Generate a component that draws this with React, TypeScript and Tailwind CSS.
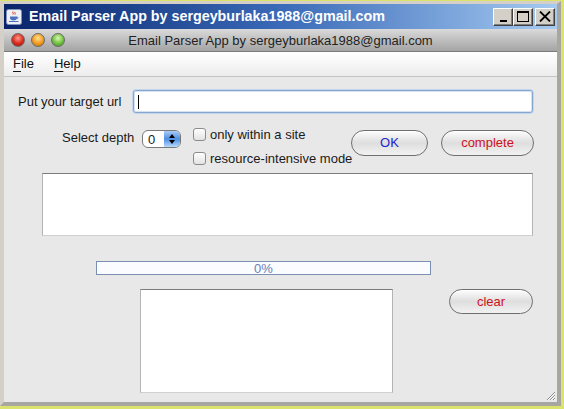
import React from 'react';

const font = "font-['Liberation_Sans',Arial,sans-serif]";

const JavaIcon = () => (
  <svg width="16" height="16" viewBox="0 0 16 16">
    <rect x="0.5" y="0.5" width="15" height="15" rx="2" fill="#eef0f4" stroke="#7f93b8" />
    <path d="M7 2.5c-1 1 1 1.6 0 3M9 3c-.8.8.8 1.3 0 2.5" stroke="#d8361f" strokeWidth="1" fill="none" />
    <path d="M4 7.5h7v1.6c0 1.5-1.5 2.4-3.5 2.4S4 10.6 4 9.1z" fill="#4a72c0" />
    <path d="M11 8c1.3 0 1.3 1.6 0 1.6" stroke="#4a72c0" fill="none" />
    <path d="M3 12.5h9.5" stroke="#4a72c0" strokeWidth="1" />
  </svg>
);

const WinButton = (props: any) => {
  return (
    <div className="flex h-[18px] w-[20px] items-center justify-center border border-b-[#404040] border-l-white border-r-[#404040] border-t-white bg-[#d4d0c8] shadow-[inset_-1px_-1px_0_#808080]">
      {props.children}
    </div>
  );
};

const Light = (props: any) => {
  return (
    <div
      className={`h-[14px] w-[14px] rounded-full border border-[#6a6a6a] ${props.cls}`}
    />
  );
};

const CheckRow = (props: any) => {
  return (
    <div className="flex h-[15px] items-center gap-[4px] whitespace-nowrap">
      <div className="h-[13px] w-[13px] shrink-0 rounded-[3px] border border-[#8c8c8c] bg-gradient-to-b from-white to-[#e2e2e2]" />
      <span className="text-[13px] leading-[15px] text-[#1a1a1a]">{props.label}</span>
    </div>
  );
};

const AquaButton = (props: any) => {
  return (
    <div
      className={`flex shrink-0 items-center justify-center rounded-full border border-[#6e6e6e] bg-gradient-to-b from-[#fdfdfd] via-[#dedede] to-[#f2f2f2] text-[13px] shadow-[inset_0_1px_0_#ffffff] ${props.cls}`}
    >
      {props.children}
    </div>
  );
};

const TextArea = (props: any) => {
  return (
    <div
      className={`shrink-0 border border-b-[#d0d0d0] border-l-[#b4b4b4] border-r-[#b4b4b4] border-t-[#7c7c7c] bg-white ${props.cls}`}
    />
  );
};

const App = () => {
  return (
    <div className={`flex h-[409px] w-[564px] flex-col bg-[#dbe36c] pt-[1px] ${font}`}>
      <div className="flex h-[405px] w-[561px] flex-col border-[4px] border-b-[#a8a6a0] border-l-[#d4d0c8] border-r-[#a8a6a0] border-t-[#d4d0c8] bg-[#d4d0c8] !border-t-[3px]">
        {/* windows title bar */}
        <div className="flex h-[25px] items-center bg-gradient-to-r from-[#0a246a] via-[#3a6ab8] to-[#a6caf0] pl-[2px] pr-[2px]">
          <JavaIcon />
          <span className="ml-[7px] text-[14.3px] font-bold leading-none text-white">
            Email Parser App by sergeyburlaka1988@gmail.com
          </span>
          <div className="ml-auto flex items-center">
            <WinButton>
              <div className="mt-[9px] h-[2px] w-[7px] bg-black" />
            </WinButton>
            <WinButton>
              <div className="h-[11px] w-[12px] border border-t-[2px] border-black" />
            </WinButton>
            <div className="ml-[2px]">
              <WinButton>
                <svg width="12" height="11" viewBox="0 0 12 11">
                  <path d="M1 0.5l10 10M11 0.5l-10 10" stroke="#000" strokeWidth="1.8" />
                </svg>
              </WinButton>
            </div>
          </div>
        </div>

        {/* mac title bar */}
        <div className="grid h-[23px] grid-cols-[1fr_auto_1fr] items-center border-b border-[#7a7a7a] bg-gradient-to-b from-[#dadada] to-[#a4a4a4]">
          <div className="flex items-center gap-[6px] pl-[7px]">
            <Light cls="bg-[radial-gradient(circle_at_50%_35%,#ff9a8a,#d8281a_55%,#a01008)]" />
            <Light cls="bg-[radial-gradient(circle_at_50%_35%,#ffe090,#f09a20_55%,#c06400)]" />
            <Light cls="bg-[radial-gradient(circle_at_50%_35%,#d8f8b0,#70c040_55%,#3a8a18)]" />
          </div>
          <span className="text-[13px] leading-none text-[#222]">
            Email Parser App by sergeyburlaka1988@gmail.com
          </span>
          <div />
        </div>

        {/* menu bar */}
        <div className="flex h-[25px] items-center gap-[20px] border-b border-[#c4c4c4] bg-gradient-to-b from-white via-[#f6f6f6] to-[#ececec] pl-[9px] text-[13px] text-[#111]">
          <span>
            <span className="underline underline-offset-[3px]">F</span>ile
          </span>
          <span>
            <span className="underline underline-offset-[3px]">H</span>elp
          </span>
        </div>

        {/* content */}
        <div className="relative flex flex-1 flex-col bg-[#e8e8e8] text-[13px] text-[#1a1a1a]">
          <div className="mt-[13px] flex items-center pl-[14px]">
            <span className="w-[115px] leading-[16px]">Put your target url</span>
            <div className="flex h-[23px] w-[400px] items-center rounded-[3px] border border-[#86a6d0] bg-white pl-[4px] shadow-[0_0_0_1px_#c4d6ec,inset_0_0_0_1px_#d6e2f2]">
              <div className="h-[14px] w-[1px] bg-black" />
            </div>
          </div>

          <div className="mt-[14px] flex items-start pl-[58px]">
            <span className="mt-[3px] w-[80px] shrink-0 leading-[16px]">Select depth</span>
            <div className="mt-[3px] flex h-[18px] w-[39px] shrink-0 overflow-hidden rounded-[6px] border border-[#7a7a7a] bg-white">
              <div className="flex flex-1 items-center pl-[5px] leading-none">0</div>
              <div className="flex w-[16px] flex-col items-center justify-center gap-[2px] bg-gradient-to-b from-[#a8ccf6] via-[#4d8fe0] to-[#b8dafc]">
                <div className="h-0 w-0 border-x-[3px] border-b-[4px] border-x-transparent border-b-black" />
                <div className="h-0 w-0 border-x-[3px] border-t-[4px] border-x-transparent border-t-black" />
              </div>
            </div>
            <div className="ml-[12px] flex w-[158px] shrink-0 flex-col gap-[9px]">
              <CheckRow label="only within a site" />
              <CheckRow label="resource-intensive mode" />
            </div>
            <AquaButton cls="mt-[3px] h-[26px] w-[77px] text-[#2323d0]">OK</AquaButton>
            <AquaButton cls="ml-[13px] mt-[3px] h-[26px] w-[93px] text-[#d0101e]">complete</AquaButton>
          </div>

          <TextArea cls="ml-[38px] mt-[7px] h-[63px] w-[491px]" />

          <div className="ml-[92px] mt-[25px] flex h-[14px] w-[335px] items-center justify-center border border-[#7d8fb0] bg-[#fafcff] text-[13px] leading-none text-[#6a80b8]">
            0%
          </div>

          <div className="mt-[14px] flex items-start">
            <TextArea cls="ml-[136px] h-[104px] w-[253px]" />
            <AquaButton cls="ml-[56px] h-[25px] w-[84px] text-[#d0101e]">clear</AquaButton>
          </div>

          <svg className="absolute bottom-[1px] right-[1px]" width="11" height="11" viewBox="0 0 11 11">
            <path d="M10 2L2 10M10 5L5 10M10 8L8 10" stroke="#8a8a8a" strokeWidth="1" />
            <path d="M10 3L3 10M10 6L6 10M10 9L9 10" stroke="#ffffff" strokeWidth="1" />
          </svg>
        </div>
      </div>
    </div>
  );
};

export default App;
